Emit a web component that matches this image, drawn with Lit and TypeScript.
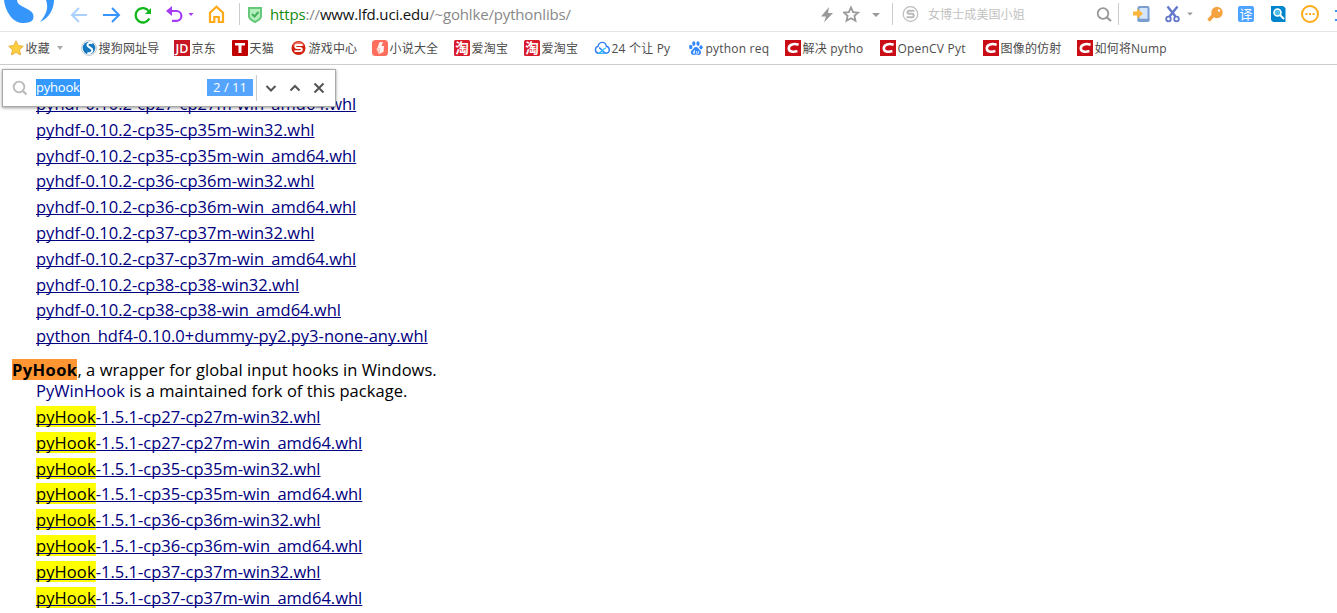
import { css, html, LitElement, svg } from "lit";
import { customElement, property } from "lit/decorators.js";

// Bookmark icons, all on a 16x16 box
const icons = {
    star: svg`<path d="M8 .8l2.2 4.8 5.1.6-3.8 3.5 1 5.2L8 12.3l-4.5 2.6 1-5.2L.7 6.2l5.1-.6z" fill="#ffcf3e" stroke="#e9ae3c" stroke-width="1"/>`,
    sogou: svg`<circle cx="8" cy="8" r="7.5" fill="#fff" stroke="#c5ccd2"/><circle cx="8" cy="8" r="6.3" fill="#1477c0"/>
        <path d="M11.5 3.2C8 2.2 6 3.6 6.5 5.6s5 2 4.8 4.6c-.1 2-2 3.4-5 3" fill="none" stroke="#fff" stroke-width="2"/>`,
    jd: svg`<rect width="16" height="16" fill="#c81623"/><text x="8" y="12.5" text-anchor="middle" textLength="13" lengthAdjust="spacingAndGlyphs" font-size="12.5" font-weight="600" fill="#fff">JD</text>`,
    tmall: svg`<rect width="16" height="16" rx="1" fill="#c10000"/><path d="M3 3h10v2.6H9.5V13h-3V5.6H3z" fill="#fff"/>`,
    game: svg`<circle cx="7.5" cy="8" r="7" fill="#d3200f"/><path d="M2 5.5a6 6 0 0 1 11 0z" fill="#ee7a62"/>
        <path d="M11.5 5H6.2C3.6 5 3.6 8 6 8h3c2.5 0 2.5 3.2 0 3.2H3.5" fill="none" stroke="#fff" stroke-width="1.8"/>`,
    novel: svg`<rect width="16" height="16" rx="3.5" fill="#ff6e5c"/><path d="M7.5 2.2L11 2 9.5 6H12L11.5 12l-5 2.3L8 10.5H4.5z" fill="#fff" opacity=".92"/><path d="M4.5 8.5l4-.8-2 6" fill="#ffd1c9"/>`,
    taobao: svg`<rect width="16" height="16" rx="1.5" fill="#d91a2b"/><text x="8" y="13" text-anchor="middle" font-size="13.5" font-weight="700" fill="#fff">淘</text>`,
    cloud: svg`<path d="M4.2 13.2a3.5 3.5 0 0 1-.2-6.8C4.6 3.6 6.2 2.4 8.2 2.4c2.3 0 3.9 1.6 4.1 3.9 1.9.4 3 1.7 3 3.5 0 1.9-1.4 3.4-3.3 3.4-2.8 0-4.2-4.8-7-5.4" fill="none" stroke="#2f7df6" stroke-width="1.4"/>
        <path d="M4.2 13.2c2.6.2 4-4 7.6-5.4" fill="none" stroke="#2fc3f5" stroke-width="1.4"/><path d="M4.2 13.2h7.5" stroke="#2fa9f5" stroke-width="1.3"/>`,
    baidu: svg`<g fill="#3388ff"><ellipse cx="2.8" cy="7" rx="1.7" ry="2.2"/><ellipse cx="5.8" cy="3.6" rx="1.6" ry="2.3"/><ellipse cx="10" cy="3.6" rx="1.6" ry="2.3"/><ellipse cx="13" cy="7.3" rx="1.6" ry="2.1"/>
        <path d="M8 7c2.2 0 2.4 2.1 4 3.3 1.9 1.5 1.3 4.6-1.2 4.6-1 0-1.7-.3-2.8-.3s-1.8.3-2.8.3c-2.6 0-3-3.1-1.3-4.6C5.6 9 5.8 7 8 7z"/></g><path d="M6.5 10v3.3H5.4v-1.6H6.5M8.6 11v2.3h2V11" fill="none" stroke="#fff" stroke-width=".8"/>`,
    csdn: svg`<rect width="16" height="16" fill="#ca0c16"/><path d="M13.6 4.7C9 3.3 4 4.2 3.8 8.2c-.1 3.5 4.4 4.2 8.6 2.9" fill="none" stroke="#fff" stroke-width="2.6"/>`,
};

@customElement("browser-toolbar")
export class BrowserToolbar extends LitElement {
    // Every icon is drawn on the full bar height, 31px
    icon(width, content) {
        return html`<svg width="${width}" height="31" viewBox="0 0 ${width} 31" fill="none">${content}</svg>`;
    }

    render() {
        return html`
            ${this.icon(60, svg`<path d="M4 0C5 10 12 22.5 22 23c5 .2 9-.6 11-3.5C35.5 12 29 10 22.5 6.5 18.5 4.5 17 2.5 17 0z" fill="#3595fb"/>
                <path d="M46 0h8c0 9-5 18-14 22C46 15 49 8 46 0z" fill="#3595fb"/>`)}
            ${this.icon(20, svg`<path d="M17 15H2.5M9 8l-7 7 7 7" stroke="#a9d0ff" stroke-width="2"/>`)}
            ${this.icon(20, svg`<path d="M1 15h15.5M10 8l7 7-7 7" stroke="#3595fb" stroke-width="2"/>`)}
            ${this.icon(20, svg`<path d="M16.3 18.5a7.2 7.2 0 1 1-.3-7" stroke="#12b71c" stroke-width="2.3"/><path d="M18 8v6h-6z" fill="#12b71c"/>`)}
            ${this.icon(20, svg`<path d="M4 11h7.5a4.8 4.8 0 0 1 0 9.8H7" stroke="#a43df5" stroke-width="2.2"/><path d="M1 11l6-5v10z" fill="#a43df5"/>`)}
            ${this.icon(7, svg`<path d="M.5 13h5L3 16z" fill="#a43df5"/>`)}
            ${this.icon(20, svg`<path d="M3 22V12.8L9.5 6.8l6.5 6v9.2h-4.2v-5H7.3v5z" stroke="#ffaa18" stroke-width="2.2"/>`)}
            <span class="line"></span>
            ${this.icon(16, svg`<path d="M2 8h12v8.5c0 2.5-3 4-6 5.5-3-1.5-6-3-6-5.5z" fill="#b5efbe" stroke="#66c978" stroke-width="2"/><path d="M5 14l2.5 2.5L11.5 12" stroke="#43b159" stroke-width="2"/>`)}
            <span class="url"><b class="scheme">https</b>://<b class="host">www.lfd.uci.edu</b>/~gohlke/pythonlibs/</span>
            ${this.icon(16, svg`<path d="M10 7L2 16.5h5L5 22.5 14 13H9z" fill="#999"/>`)}
            ${this.icon(18, svg`<path d="M8 7.5l2.1 4.6 5 .5-3.7 3.3 1.1 4.8L8 18.3l-4.5 2.4 1.1-4.8L.9 12.6l5-.5z" stroke="#999" stroke-width="1.8"/>`)}
            ${this.icon(10, svg`<path d="M1 13h8l-4 4z" fill="#999"/>`)}
            <span class="line"></span>
            ${this.icon(18, svg`<circle cx="8.5" cy="14" r="7.3" stroke="#bbb" stroke-width="1.2"/><path d="M12.5 10.8H7c-2 0-2 3 0 3h3.2c2 0 2 3.4 0 3.4H4.5" stroke="#bbb" stroke-width="2"/>`)}
            <span class="hint">女博士成美国小姐</span>
            ${this.icon(18, svg`<circle cx="7" cy="13.5" r="5.3" stroke="#999" stroke-width="1.8"/><path d="M11 17.5l4 3.5" stroke="#999" stroke-width="2.2"/>`)}
            <span class="line"></span>
            ${this.icon(18, svg`<rect x="6.5" y="7" width="10" height="14" rx="1" fill="#d5e6fa" stroke="#7a9dd0" stroke-width="2"/><path d="M5.5 20h12" stroke="#7a9dd0" stroke-width="2.5"/><path d="M1 11.5h4V8.5l6 5.3-6 5v-3.2H1z" fill="#fcb53c"/>`)}
            ${this.icon(16, svg`<path d="M2.5 6.5l8 10M12.5 6.5l-8 10" stroke="#6478cb" stroke-width="2.4"/><circle cx="3.5" cy="19" r="2.3" stroke="#6478cb" stroke-width="1.8"/><circle cx="11.5" cy="19" r="2.3" stroke="#6478cb" stroke-width="1.8"/>`)}
            ${this.icon(7, svg`<path d="M.3 12.5h5.5L3 15.5z" fill="#999"/>`)}
            ${this.icon(17, svg`<circle cx="10" cy="12.5" r="5.7" fill="#f4a340"/><path d="M7 14.5l-5.5 6" stroke="#f4a340" stroke-width="3.4"/><circle cx="12" cy="10.5" r="1.2" fill="#fff"/>`)}
            ${this.icon(17, svg`<rect y="6" width="16" height="16" rx="2" fill="#4da3ff"/><text x="8" y="18.8" text-anchor="middle" font-size="13" fill="#fff">译</text>`)}
            ${this.icon(17, svg`<path d="M1 6h12l2.5 2v14H3L1 20z" fill="#0084cb"/><circle cx="7.5" cy="12.5" r="3.5" fill="#53bfe8" stroke="#fff" stroke-width="1.6"/><path d="M10 15l4 4" stroke="#fff" stroke-width="2"/>`)}
            ${this.icon(19, svg`<circle cx="9" cy="14" r="8" stroke="#ffaa18" stroke-width="2"/><path d="M4.5 13h2v2h-2zM8 13h2v2H8zM11.5 13h2v2h-2z" fill="#ffaa18"/>`)}
            ${this.icon(3, svg`<path d="M1 10h2v2H1zM1 19h2v2H1z" fill="#3595fb"/>`)}
        `;
    }

    static styles = css`
        :host {
            display: grid;
            grid-template-columns: 70px 32px 31px 32px 23px 19px 32px 8px 23px 549px 24px 28px 21px 10px 26px 168px 22px 14px 33px 22px 20px 31px 32px 31px 33px 3px;
            height: 31px;
            border-bottom: 1px solid #e5e5e5;
        }

        svg {
            display: block;
        }

        .line {
            width: 1px;
            height: 22px;
            margin-top: 3px;
            background: #ccc;
        }

        .url {
            font-size: 15px;
            line-height: 29px;
            letter-spacing: -0.16px;
            color: #888;
        }

        .url b {
            font-weight: normal;
        }

        .scheme {
            color: #138a13;
        }

        .host {
            color: #111;
        }

        .hint {
            font-size: 12px;
            line-height: 29px;
            letter-spacing: 0.1px;
            color: #c2c2c2;
        }
    `;
}

@customElement("bookmark-bar")
export class BookmarkBar extends LitElement {
    @property({ type: Array })
    items = [
        { icon: "star", label: "收藏", menu: true },
        { icon: "sogou", label: "搜狗网址导" },
        { icon: "jd", label: "京东" },
        { icon: "tmall", label: "天猫" },
        { icon: "game", label: "游戏中心" },
        { icon: "novel", label: "小说大全" },
        { icon: "taobao", label: "爱淘宝" },
        { icon: "taobao", label: "爱淘宝" },
        { icon: "cloud", label: "24 个让 Py" },
        { icon: "baidu", label: "python req" },
        { icon: "csdn", label: "解决 pytho" },
        { icon: "csdn", label: "OpenCV Pyt" },
        { icon: "csdn", label: "图像的仿射" },
        { icon: "csdn", label: "如何将Nump" },
    ];

    render() {
        return html`
            ${this.items.map(item => html`
                <div class="item">
                    <svg width="16" height="16" viewBox="0 0 16 16">${icons[item.icon]}</svg>
                    <span>${item.label}</span>
                    ${item.menu ? html`<i class="caret"></i>` : ""}
                </div>
            `)}
        `;
    }

    static styles = css`
        :host {
            display: grid;
            grid-template-columns: 73px 93px 58px 59px 81px 82px 70px 70px 94px 97px 95px 103px 94px auto;
            height: 32px;
            padding-left: 8px;
            border-bottom: 1px solid #ccc;
        }

        .item {
            display: flex;
            align-items: center;
            gap: 1.5px;
            font-size: 12px;
            letter-spacing: 0.2px;
            color: #4c4c4c;
            white-space: nowrap;
        }

        svg {
            flex: none;
            letter-spacing: 0;
        }

        .caret {
            margin-left: 6px;
            border: 3px solid transparent;
            border-top: 4px solid #aaa;
            border-bottom: none;
        }
    `;
}

@customElement("find-bar")
export class FindBar extends LitElement {
    render() {
        return html`
            <svg class="glass" width="16" height="16" viewBox="0 0 16 16" fill="none"><circle cx="7" cy="7" r="5.3" stroke="#bbb" stroke-width="1.8"/><path d="M11 11l3.5 3.5" stroke="#bbb" stroke-width="2.2"/></svg>
            <span class="query"><mark>pyhook</mark></span>
            <span class="count">2 / 11</span>
            <span class="line"></span>
            <svg width="12" height="12" viewBox="0 0 12 12" fill="none"><path d="M1.5 4L6 8.5 10.5 4" stroke="#555" stroke-width="2"/></svg>
            <svg width="12" height="12" viewBox="0 0 12 12" fill="none"><path d="M1.5 8.5L6 4l4.5 4.5" stroke="#555" stroke-width="2"/></svg>
            <svg width="12" height="12" viewBox="0 0 12 12" fill="none"><path d="M1.5 1.5l9 9M10.5 1.5l-9 9" stroke="#555" stroke-width="2"/></svg>
        `;
    }

    static styles = css`
        :host {
            display: flex;
            align-items: center;
            box-sizing: border-box;
            width: 334px;
            height: 38px;
            padding: 0 10px 1px 9px;
            gap: 12px;
            border: 1px solid #aaa;
            background: #fff;
            box-shadow: 0 1px 3px rgba(0, 0, 0, 0.4);
            font-size: 13px;
            line-height: 17px;
        }

        svg {
            flex: none;
        }

        .glass {
            margin-right: -4px;
        }

        .query {
            display: flex;
            flex: 1;
        }

        mark {
            background: #3399ff;
            color: #fff;
            letter-spacing: -0.2px;
        }

        .count {
            width: 46px;
            background: #55a5ff;
            color: #fff;
            text-align: center;
        }

        .line {
            width: 1px;
            height: 26px;
            margin: 0 -4px 0 -9px;
            background: #ccc;
        }
    `;
}

@customElement("app-root")
export class AppRoot extends LitElement {
    @property({ type: Array })
    hdfFiles = [
        "pyhdf-0.10.2-cp27-cp27m-win_amd64.whl",
        "pyhdf-0.10.2-cp35-cp35m-win32.whl",
        "pyhdf-0.10.2-cp35-cp35m-win_amd64.whl",
        "pyhdf-0.10.2-cp36-cp36m-win32.whl",
        "pyhdf-0.10.2-cp36-cp36m-win_amd64.whl",
        "pyhdf-0.10.2-cp37-cp37m-win32.whl",
        "pyhdf-0.10.2-cp37-cp37m-win_amd64.whl",
        "pyhdf-0.10.2-cp38-cp38-win32.whl",
        "pyhdf-0.10.2-cp38-cp38-win_amd64.whl",
        "python_hdf4-0.10.0+dummy-py2.py3-none-any.whl",
    ];

    @property({ type: Array })
    hookFiles = [
        "-1.5.1-cp27-cp27m-win32.whl",
        "-1.5.1-cp27-cp27m-win_amd64.whl",
        "-1.5.1-cp35-cp35m-win32.whl",
        "-1.5.1-cp35-cp35m-win_amd64.whl",
        "-1.5.1-cp36-cp36m-win32.whl",
        "-1.5.1-cp36-cp36m-win_amd64.whl",
        "-1.5.1-cp37-cp37m-win32.whl",
        "-1.5.1-cp37-cp37m-win_amd64.whl",
    ];

    render() {
        return html`
            <browser-toolbar></browser-toolbar>
            <bookmark-bar></bookmark-bar>
            <main>
                <ul>
                    ${this.hdfFiles.map(name => html`<li><a>${name}</a></li>`)}
                </ul>
                <p><strong>PyHook</strong>, a wrapper for global input hooks in Windows.</p>
                <p class="note"><a>PyWinHook</a> is a maintained fork of this package.</p>
                <ul>
                    ${this.hookFiles.map(name => html`<li><a><mark>pyHook</mark>${name}</a></li>`)}
                </ul>
            </main>
            <find-bar></find-bar>
        `;
    }

    static styles = css`
        :host {
            display: block;
            position: relative;
            height: 613px;
            overflow: hidden;
            background: #fff;
            font-family: "Open Sans", "Noto Sans CJK SC", sans-serif;
        }

        find-bar {
            position: absolute;
            left: 2px;
            top: 69px;
        }

        main {
            padding: 28.1px 12px 0;
            font-size: 16.5px;
            line-height: 21px;
            letter-spacing: 0.01px;
            color: #000;
        }

        ul {
            margin: 0;
            padding: 0 0 0 24px;
            list-style: none;
        }

        li {
            margin-bottom: 4.8px;
        }

        a {
            color: #000080;
        }

        li a {
            text-decoration: underline;
            text-decoration-skip-ink: none;
            text-decoration-thickness: 1px;
            text-underline-offset: 1px;
        }

        p {
            margin: 13px 0 0;
            letter-spacing: 0.05px;
        }

        .note {
            margin: 0 0 4.8px;
            padding-left: 24px;
        }

        strong {
            background: linear-gradient(#ff9632, #ff9632) center / 100% 21px no-repeat;
            letter-spacing: 0.4px;
        }

        mark {
            background: linear-gradient(#ff0, #ff0) center / 100% 21px no-repeat;
            color: #000;
            letter-spacing: 0.1px;
        }
    `;
}
